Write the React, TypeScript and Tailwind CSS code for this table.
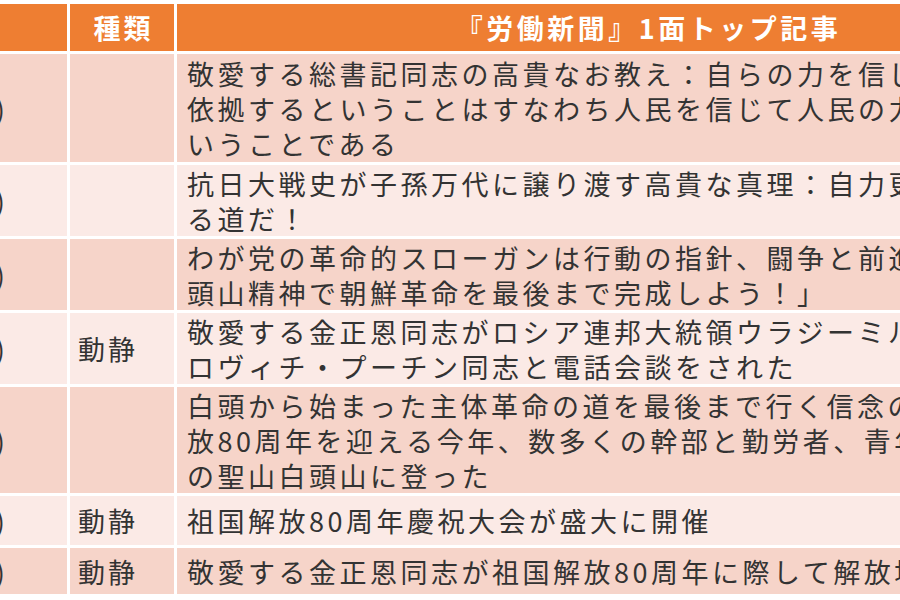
import React from "react";

type Row = { day: string; kind: string; lines: string[]; h: string; dark: boolean };

const rows: Row[] = [
  {
    day: "(金)",
    kind: "",
    lines: [
      "敬愛する総書記同志の高貴なお教え：自らの力を信じ",
      "依拠するということはすなわち人民を信じて人民の力に",
      "いうことである",
    ],
    h: "h-[108px]",
    dark: true,
  },
  {
    day: "(土)",
    kind: "",
    lines: ["抗日大戦史が子孫万代に譲り渡す高貴な真理：自力更生", "る道だ！"],
    h: "h-[71px]",
    dark: false,
  },
  {
    day: "(日)",
    kind: "",
    lines: ["わが党の革命的スローガンは行動の指針、闘争と前進", "頭山精神で朝鮮革命を最後まで完成しよう！」"],
    h: "h-[71px]",
    dark: true,
  },
  {
    day: "(月)",
    kind: "動静",
    lines: ["敬愛する金正恩同志がロシア連邦大統領ウラジーミル", "ロヴィチ・プーチン同志と電話会談をされた"],
    h: "h-[71px]",
    dark: false,
  },
  {
    day: "(火)",
    kind: "",
    lines: [
      "白頭から始まった主体革命の道を最後まで行く信念の",
      "放80周年を迎える今年、数多くの幹部と勤労者、青年",
      "の聖山白頭山に登った",
    ],
    h: "h-[106px]",
    dark: true,
  },
  {
    day: "(水)",
    kind: "動静",
    lines: ["祖国解放80周年慶祝大会が盛大に開催"],
    h: "h-[49px]",
    dark: false,
  },
  {
    day: "(木)",
    kind: "動静",
    lines: ["敬愛する金正恩同志が祖国解放80周年に際して解放地"],
    h: "h-[46px]",
    dark: true,
  },
];

export default function App() {
  return (
    <div
      className="w-[900px] h-[600px] overflow-hidden bg-white pt-[4px] text-[#333333]"
      style={{ fontFamily: '"Noto Sans CJK JP", "Noto Sans", sans-serif' }}
    >
      <div className="ml-[-73px] grid grid-cols-[140px_104px_940px] gap-[3px] w-[1190px]">
        {/* header */}
        <div className="h-[47px] bg-[#EE7E32]" />
        <div className="h-[47px] bg-[#EE7E32] flex items-center justify-center text-white font-bold text-[27px] tracking-[3px] pl-[3px] leading-none">
          種類
        </div>
        <div className="h-[47px] bg-[#EE7E32] flex items-center justify-center text-white font-bold text-[27px] tracking-[3.5px] pl-[3px] leading-none whitespace-nowrap">
          『労働新聞』1面トップ記事
        </div>
        {rows.map((r, i) => {
          const bg = r.dark ? "bg-[#F6D4C9]" : "bg-[#FBEAE6]";
          return (
            <React.Fragment key={i}>
              <div
                className={`${r.h} ${bg} flex items-center justify-end pr-[62px] text-[27px] leading-none whitespace-nowrap overflow-hidden`}
              >
                {r.day}
              </div>
              <div
                className={`${r.h} ${bg} flex items-center justify-start pl-[8px] text-[27px] tracking-[3px] leading-none whitespace-nowrap`}
              >
                {r.kind}
              </div>
              <div
                className={`${r.h} ${bg} flex flex-col justify-center pl-[10px] text-[27px] tracking-[3.5px] leading-[35px] whitespace-nowrap overflow-hidden`}
              >
                {r.lines.map((l, j) => (
                  <div key={j}>{l}</div>
                ))}
              </div>
            </React.Fragment>
          );
        })}
      </div>
    </div>
  );
}
